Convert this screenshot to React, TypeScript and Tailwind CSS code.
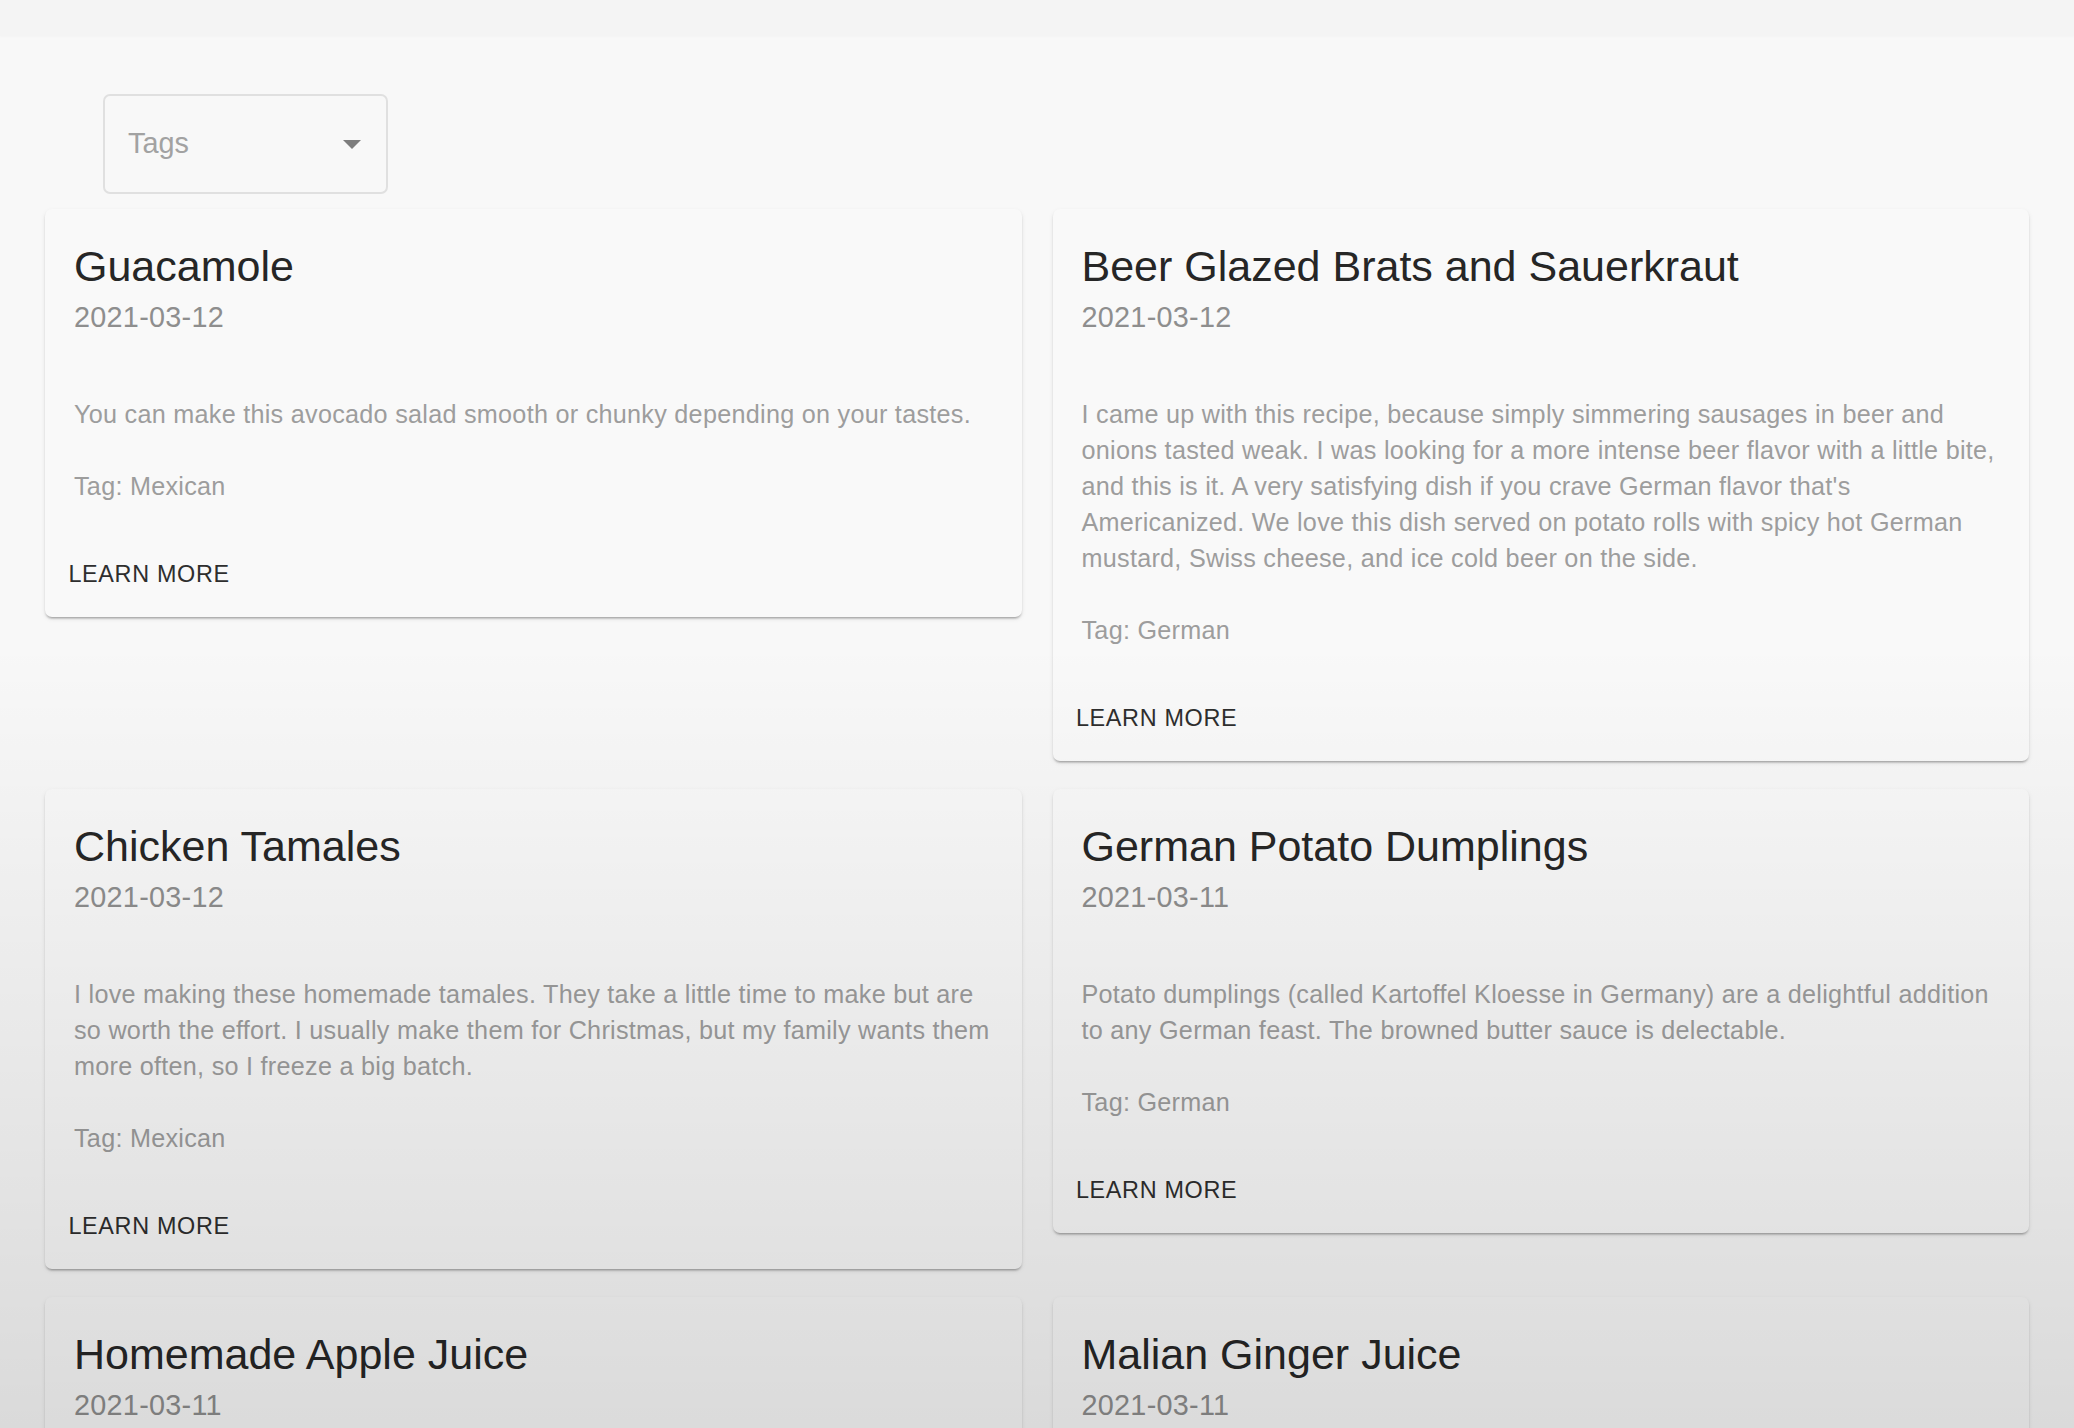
import React from "react"

type Recipe = {
  title: string
  date: string
  lines: string[]
  tag: string
}

const recipes: Recipe[] = [
  {
    title: "Guacamole",
    date: "2021-03-12",
    lines: ["You can make this avocado salad smooth or chunky depending on your tastes."],
    tag: "Mexican",
  },
  {
    title: "Beer Glazed Brats and Sauerkraut",
    date: "2021-03-12",
    lines: [
      "I came up with this recipe, because simply simmering sausages in beer and",
      "onions tasted weak. I was looking for a more intense beer flavor with a little bite,",
      "and this is it. A very satisfying dish if you crave German flavor that's",
      "Americanized. We love this dish served on potato rolls with spicy hot German",
      "mustard, Swiss cheese, and ice cold beer on the side.",
    ],
    tag: "German",
  },
  {
    title: "Chicken Tamales",
    date: "2021-03-12",
    lines: [
      "I love making these homemade tamales. They take a little time to make but are",
      "so worth the effort. I usually make them for Christmas, but my family wants them",
      "more often, so I freeze a big batch.",
    ],
    tag: "Mexican",
  },
  {
    title: "German Potato Dumplings",
    date: "2021-03-11",
    lines: [
      "Potato dumplings (called Kartoffel Kloesse in Germany) are a delightful addition",
      "to any German feast. The browned butter sauce is delectable.",
    ],
    tag: "German",
  },
  {
    title: "Homemade Apple Juice",
    date: "2021-03-11",
    lines: ["A simple, fresh juice made from crisp apples, strained and chilled."],
    tag: "American",
  },
  {
    title: "Malian Ginger Juice",
    date: "2021-03-11",
    lines: ["A spicy and refreshing drink made with fresh ginger, lemon and pineapple."],
    tag: "African",
  },
]

function RecipeCard({ recipe }: { recipe: Recipe }) {
  return (
    <div className="rounded-[7px] bg-[#f9f9f9] shadow-[0_3px_2px_-2px_rgba(0,0,0,0.2),0_2px_2px_0_rgba(0,0,0,0.12),0_2px_5px_0_rgba(0,0,0,0.08)]">
      <div className="px-[29px] pt-[29px] pb-[29px]">
        <h5 className="text-[43px] leading-[57.6px] text-[#262626]">{recipe.title}</h5>
        <p className="text-[28.8px] leading-[43.2px] tracking-[0.00938em] text-[#8e8e8e]">{recipe.date}</p>
        <p className="mt-[57px] whitespace-nowrap text-[25.2px] leading-[36px] tracking-[0.01071em] text-[#9d9d9d]">
          {recipe.lines.map((line, i) => (
            <React.Fragment key={i}>
              {line}
              {i < recipe.lines.length - 1 && <br />}
            </React.Fragment>
          ))}
        </p>
        <p className="mt-[36px] text-[25.2px] leading-[36px] tracking-[0.01071em] text-[#9d9d9d]">
          Tag: {recipe.tag}
        </p>
      </div>
      <div className="flex p-[14.4px]">
        <button className="px-[9px] py-[7.2px] text-[23.4px] leading-[41px] uppercase tracking-[0.02857em] text-[#2e2e2e]">
          Learn More
        </button>
      </div>
    </div>
  )
}

export default function App() {
  return (
    <div className="relative h-[1428px] overflow-hidden bg-[#f8f8f8] [font-family:'Liberation_Sans',Arial,sans-serif]">
      <div className="h-[36px] bg-[#f4f4f4] shadow-[0_1px_2px_rgba(0,0,0,0.02)]" />

      <div className="pl-[103px] pt-[58px]">
        <div className="flex h-[100px] w-[285px] items-center justify-between rounded-[7px] border-2 border-[#e0e0e0] pl-[23px] pr-[25px]">
          <span className="text-[28.8px] text-[#a2a2a2]">Tags</span>
          <svg width="18" height="9" viewBox="0 0 18 9">
            <polygon points="0,0 18,0 9,9" fill="#7d7d7d" />
          </svg>
        </div>
      </div>

      <div className="mt-[15px] grid grid-cols-2 items-start gap-x-[31px] gap-y-[28px] px-[45px]">
        {recipes.map((r) => (
          <RecipeCard key={r.title} recipe={r} />
        ))}
      </div>

      <div className="pointer-events-none absolute inset-0 bg-[linear-gradient(to_bottom,transparent_45%,rgba(0,0,0,0.12))]" />
    </div>
  )
}
